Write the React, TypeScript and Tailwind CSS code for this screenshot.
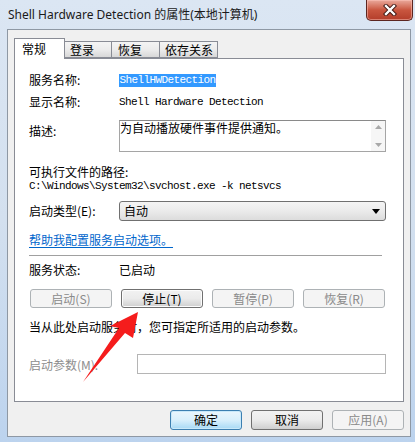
import React from "react";

const mono = "font-['Liberation_Mono','DejaVu_Sans_Mono',monospace] text-[11px] tracking-[-0.6px]";

function TabBtn({ label, selected }: { label: string; selected?: boolean }) {
  if (selected) {
    return (
      <div className="h-[21px] w-[51px] border-x border-t border-[#898c95] bg-white pl-[7px] pt-[2px] leading-[16px]">
        {label}
      </div>
    );
  }
  return null;
}

function Btn({ label, kind }: { label: string; kind: "normal" | "disabled" | "focus" }) {
  const base = "flex h-[19px] items-center justify-center rounded-[3px] border text-[12px] leading-[14px]";
  if (kind === "disabled")
    return <div className={`${base} w-[82px] border-[#adb2b5] bg-[#f4f4f4] text-[#8a8a8a]`}>{label}</div>;
  return (
    <div className={`${base} w-[82px] border-[#707070] bg-gradient-to-b from-[#f2f2f2] via-[#ebebeb] to-[#cfcfcf] text-black shadow-[inset_0_0_0_1px_#fcfcfc]`}>
      {label}
    </div>
  );
}

function Row({ label, children, gray }: { label: string; children?: React.ReactNode; gray?: boolean }) {
  return (
    <div className="flex h-[14px] items-center leading-[14px]">
      <div className={`w-[90px] shrink-0 ${gray ? "text-[#8d8d8d]" : ""}`}>{label}</div>
      {children}
    </div>
  );
}

export default function App() {
  return (
    <div className="relative h-[442px] w-[415px] overflow-hidden bg-gradient-to-b from-[#dbe6f3] via-[#d3e0ef] to-[#bcd3ee] font-['Noto_Sans_CJK_SC',sans-serif] text-[12px] text-black">
      {/* title bar */}
      <div className="flex h-[29px] items-start justify-between">
        <div className="pl-[8px] pt-[6px] font-['Segoe_UI','Noto_Sans','Noto_Sans_CJK_SC',sans-serif] text-[12px] leading-[18px] text-[#1a1a1a]">
          Shell Hardware Detection 的属性(本地计算机)
        </div>
        <div className="mr-[2px] flex h-[21px] w-[47px] items-center justify-center rounded-b-[5px] border border-t-0 border-[#5c2620] bg-gradient-to-b from-[#e9a99c] via-[#c9563f] to-[#b33d2a] shadow-[inset_0_0_0_1px_rgba(255,200,190,0.5)]">
          <svg width="14" height="12" viewBox="0 0 14 12">
            <path d="M3 2 L11 10 M11 2 L3 10" stroke="#3a1410" strokeWidth="4.2" strokeLinecap="square" />
            <path d="M3 2 L11 10 M11 2 L3 10" stroke="#ffffff" strokeWidth="2.4" strokeLinecap="square" />
          </svg>
        </div>
      </div>

      {/* dialog body */}
      <div className="ml-[7px] flex h-[408px] w-[404px] flex-col border border-[#8e98a4] bg-[#f0f0f0] px-[6px] pt-[8px]">
        {/* tabs */}
        <div className="relative z-10 -mb-px flex h-[21px] items-end">
          <TabBtn label="常规" selected />
          <div className="mb-px h-[17px] w-[47px] border-y border-r border-[#898c95] bg-gradient-to-b from-[#f4f4f4] via-[#ececec] to-[#d8d8d8] pl-[5px] leading-[15px]">登录</div>
          <div className="mb-px h-[17px] w-[48px] border-y border-r border-[#898c95] bg-gradient-to-b from-[#f4f4f4] via-[#ececec] to-[#d8d8d8] pl-[6px] leading-[15px]">恢复</div>
          <div className="mb-px h-[17px] w-[58px] border-y border-r border-[#898c95] bg-gradient-to-b from-[#f4f4f4] via-[#ececec] to-[#d8d8d8] pl-[5px] leading-[15px]">依存关系</div>
        </div>

        {/* tab panel */}
        <div className="flex h-[344px] flex-col border border-[#898c95] bg-white px-[14px] pt-[14px]">
          <Row label="服务名称:">
            <span className={`${mono} bg-[#3399ff] px-[0.5px] leading-[13px] text-white`}>ShellHWDetection</span>
          </Row>
          <div className="mt-[8px]">
            <Row label="显示名称:">
              <span className={mono}>Shell Hardware Detection</span>
            </Row>
          </div>
          <div className="mt-[11px] flex items-start">
            <div className="w-[90px] shrink-0 pt-[4px] leading-[14px]">描述:</div>
            <div className="flex h-[32px] w-[267px] border border-[#a5a5a5] border-t-[#8a8a8a]">
              <div className="flex-1 pl-[0px] pt-[0px] leading-[14px]">为自动播放硬件事件提供通知。</div>
              <div className="flex w-[14px] flex-col items-center justify-between bg-[#f6f6f6] py-[4px]">
                <svg width="7" height="4" viewBox="0 0 7 4"><path d="M0 4 L3.5 0 L7 4 Z" fill="#a8a8a8" /></svg>
                <svg width="7" height="4" viewBox="0 0 7 4"><path d="M0 0 L3.5 4 L7 0 Z" fill="#a8a8a8" /></svg>
              </div>
            </div>
          </div>
          <div className="mt-[13px] h-[14px] leading-[14px]">可执行文件的路径:</div>
          <div className={`${mono} h-[14px] leading-[14px]`}>C:\Windows\System32\svchost.exe -k netsvcs</div>
          <div className="mt-[8px] flex h-[20px] items-center">
            <div className="w-[90px] shrink-0 leading-[14px]">启动类型(E):</div>
            <div className="flex h-[20px] w-[267px] items-center justify-between rounded-[3px] border border-[#707070] bg-gradient-to-b from-[#f4f4f4] via-[#ebebeb] to-[#dcdcdc] pl-[4px] pr-[5px]">
              <span className="leading-[14px]">自动</span>
              <svg width="8" height="5" viewBox="0 0 8 5"><path d="M0 0 L8 0 L4 5 Z" fill="#000" /></svg>
            </div>
          </div>
          <div className="mt-[12px] h-[14px] leading-[14px]">
            <span className="text-[#0066cc] underline underline-offset-[2px]">帮助我配置服务启动选项。</span>
          </div>
          <div className="mt-[8px] h-px w-[353px] bg-[#a0a0a0]" />
          <div className="mt-[7px]">
            <Row label="服务状态:">
              <span>已启动</span>
            </Row>
          </div>
          <div className="mt-[12px] flex gap-[9px] pl-px">
            <Btn label="启动(S)" kind="disabled" />
            <Btn label="停止(T)" kind="normal" />
            <Btn label="暂停(P)" kind="disabled" />
            <Btn label="恢复(R)" kind="disabled" />
          </div>
          <div className="mt-[12px] h-[14px] leading-[14px]">当从此处启动服务时，您可指定所适用的启动参数。</div>
          <div className="mt-[20px] flex h-[20px] items-center">
            <div className="w-[108px] shrink-0 pt-[2px] leading-[14px] text-[#8d8d8d]">启动参数(M):</div>
            <div className="h-[20px] w-[249px] border border-[#b5b5b5] bg-white" />
          </div>
        </div>

        {/* bottom buttons */}
        <div className="mt-[8px] flex justify-end gap-[9px]">
          <div className="flex h-[20px] w-[72px] items-center justify-center rounded-[3px] border border-[#3c7fb1] bg-gradient-to-b from-[#eaf6fd] via-[#d9f0fc] to-[#a7d9f5] shadow-[inset_0_0_0_1px_#c9e9fa] leading-[14px]">确定</div>
          <div className="flex h-[20px] w-[72px] items-center justify-center rounded-[3px] border border-[#707070] bg-gradient-to-b from-[#f2f2f2] via-[#ebebeb] to-[#cfcfcf] leading-[14px]">取消</div>
          <div className="flex h-[20px] w-[72px] items-center justify-center rounded-[3px] border border-[#adb2b5] bg-[#f4f4f4] leading-[14px] text-[#8a8a8a]">应用(A)</div>
        </div>
      </div>

      {/* red arrow annotation */}
      <svg className="pointer-events-none absolute left-0 top-0" width="415" height="442" viewBox="0 0 415 442">
        <polygon
          points="138,312 133,338 125,333 83,382 119,328 110,326"
          fill="#f51c1c"
        />
      </svg>
    </div>
  );
}
